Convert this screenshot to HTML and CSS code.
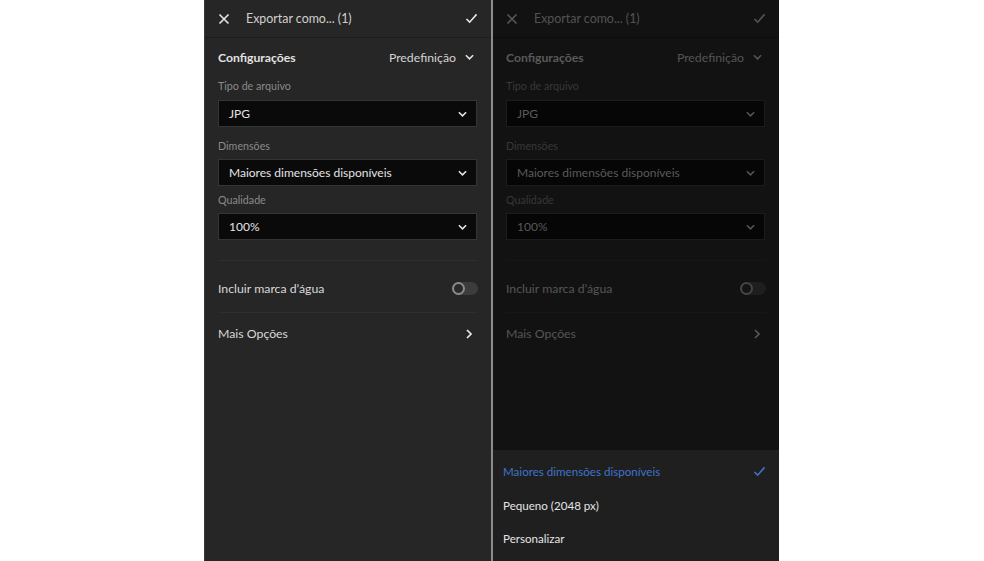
FILE: index.html
```html
<!DOCTYPE html>
<html lang="pt">
<head>
<meta charset="utf-8">
<link rel="stylesheet" href="styles.css">
</head>
<body>
<div class="stage">
  <section class="phone">
    <header class="topbar">
      <svg class="ic-x" viewBox="0 0 12 12"><path d="M1.5 1.5 L10.5 10.5 M10.5 1.5 L1.5 10.5"/></svg>
      <span class="title">Exportar como... (1)</span>
      <svg class="ic-check" viewBox="0 0 14 12"><path d="M1.5 6.5 L5 10 L12.5 1.5"/></svg>
    </header>
    <div class="content">
      <div class="settings-row">
        <span class="settings-title">Configurações</span>
        <span class="preset">Predefinição <svg class="chev" viewBox="0 0 10 6"><path d="M1 1 L5 5 L9 1"/></svg></span>
      </div>
      <div class="label l1">Tipo de arquivo</div>
      <div class="select">JPG <svg class="chev" viewBox="0 0 10 6"><path d="M1 1 L5 5 L9 1"/></svg></div>
      <div class="label l2">Dimensões</div>
      <div class="select">Maiores dimensões disponíveis <svg class="chev" viewBox="0 0 10 6"><path d="M1 1 L5 5 L9 1"/></svg></div>
      <div class="label l3">Qualidade</div>
      <div class="select">100% <svg class="chev" viewBox="0 0 10 6"><path d="M1 1 L5 5 L9 1"/></svg></div>
      <div class="row first-row">
        <span>Incluir marca d’água</span>
        <span class="toggle"><span class="knob"></span></span>
      </div>
      <div class="row">
        <span>Mais Opções</span>
        <svg class="chev-r" viewBox="0 0 6 10"><path d="M1 1 L5 5 L1 9"/></svg>
      </div>
    </div>
  </section>
  <div class="divider"></div>
  <section class="phone dim">
    <header class="topbar">
      <svg class="ic-x" viewBox="0 0 12 12"><path d="M1.5 1.5 L10.5 10.5 M10.5 1.5 L1.5 10.5"/></svg>
      <span class="title">Exportar como... (1)</span>
      <svg class="ic-check" viewBox="0 0 14 12"><path d="M1.5 6.5 L5 10 L12.5 1.5"/></svg>
    </header>
    <div class="content">
      <div class="settings-row">
        <span class="settings-title">Configurações</span>
        <span class="preset">Predefinição <svg class="chev" viewBox="0 0 10 6"><path d="M1 1 L5 5 L9 1"/></svg></span>
      </div>
      <div class="label l1">Tipo de arquivo</div>
      <div class="select">JPG <svg class="chev" viewBox="0 0 10 6"><path d="M1 1 L5 5 L9 1"/></svg></div>
      <div class="label l2">Dimensões</div>
      <div class="select">Maiores dimensões disponíveis <svg class="chev" viewBox="0 0 10 6"><path d="M1 1 L5 5 L9 1"/></svg></div>
      <div class="label l3">Qualidade</div>
      <div class="select">100% <svg class="chev" viewBox="0 0 10 6"><path d="M1 1 L5 5 L9 1"/></svg></div>
      <div class="row first-row">
        <span>Incluir marca d’água</span>
        <span class="toggle"><span class="knob"></span></span>
      </div>
      <div class="row">
        <span>Mais Opções</span>
        <svg class="chev-r" viewBox="0 0 6 10"><path d="M1 1 L5 5 L1 9"/></svg>
      </div>
    </div>
    <div class="sheet">
      <div class="sheet-item selected">
        <span>Maiores dimensões disponíveis</span>
        <svg class="ic-check blue" viewBox="0 0 14 12"><path d="M1.5 6.5 L5 10 L12.5 1.5"/></svg>
      </div>
      <div class="sheet-item">Pequeno (2048 px)</div>
      <div class="sheet-item">Personalizar</div>
    </div>
  </section>
</div>
</body>
</html>
```

FILE: styles.css
```css
* { box-sizing: border-box; }
html, body { margin: 0; padding: 0; background: #ffffff; }
body {
  font-family: Lato, "Noto Sans", sans-serif;
  width: 984px;
  height: 561px;
  overflow: hidden;
}
.stage {
  display: flex;
  height: 561px;
  padding-left: 204px;
}
.phone {
  position: relative;
  width: 287px;
  height: 561px;
  background: #262626;
  color: #d6d6d6;
  border-left: 1px solid #3a3a3a;
}
.divider {
  width: 2px;
  background: #8c8c8c;
}
.topbar {
  height: 38px;
  display: flex;
  align-items: center;
  padding: 0 13px 0 13px;
  border-bottom: 1px solid #1c1c1c;
}
.ic-x {
  width: 12px;
  height: 12px;
  fill: none;
  stroke: #e6e6e6;
  stroke-width: 1.6;
}
.title {
  margin-left: 16px;
  font-size: 12.4px;
  color: #d0d0d0;
  flex: 1;
}
.ic-check {
  width: 13px;
  height: 11px;
  fill: none;
  stroke: #e8e8e8;
  stroke-width: 1.7;
}
.content {
  padding: 0 14px 0 13px;
}
.settings-row {
  height: 38px;
  display: flex;
  align-items: center;
  justify-content: space-between;
}
.settings-title {
  font-size: 12.2px;
  font-weight: 700;
  color: #e2e2e2;
}
.preset {
  font-size: 12.3px;
  color: #d4d4d4;
  display: flex;
  align-items: center;
  gap: 9px;
  padding-right: 3px;
}
.chev {
  width: 9px;
  height: 6px;
  fill: none;
  stroke: #e6e6e6;
  stroke-width: 1.7;
}
.chev-r {
  width: 6px;
  height: 10px;
  fill: none;
  stroke: #e6e6e6;
  stroke-width: 1.7;
  margin-right: 5px;
}
.label {
  font-size: 10.7px;
  color: #8a8a8a;
  height: 14px;
  line-height: 14px;
}
.l1 { margin-top: 3px; margin-bottom: 7px; }
.l2 { margin-top: 12px; margin-bottom: 6px; }
.l3 { margin-top: 7px; margin-bottom: 6px; }
.select {
  height: 27px;
  background: #0a0a0a;
  border: 1px solid #353535;
  display: flex;
  align-items: center;
  justify-content: space-between;
  padding: 0 9px 0 10px;
  font-size: 12px;
  color: #e4e4e4;
}
.row {
  height: 42px;
  display: flex;
  align-items: center;
  justify-content: space-between;
  font-size: 12.3px;
  color: #d8d8d8;
  border-top: 1px solid #2e2e2e;
}
.first-row {
  margin-top: 20px;
  height: 52px;
  padding-top: 3px;
}
.toggle {
  position: relative;
  width: 26px;
  height: 13px;
  border-radius: 7px;
  background: #3c3c3c;
  margin-right: -1px;
}
.knob {
  position: absolute;
  left: 0;
  top: 0;
  width: 13px;
  height: 13px;
  border-radius: 50%;
  background: #2a2a2a;
  border: 2px solid #8a8a8a;
}
/* dimmed state */
.dim {
  background: #121212;
  border-left: none;
  width: 286px;
}
.dim .topbar { border-bottom-color: #0c0c0c; }
.dim .title { color: #525252; }
.dim .ic-x, .dim .ic-check, .dim .chev, .dim .chev-r { stroke: #565656; }
.dim .settings-title { color: #5a5a5a; }
.dim .preset { color: #555; }
.dim .label { color: #383838; }
.dim .select { background: #060606; border-color: #1c1c1c; color: #5a5a5a; }
.dim .row { color: #565656; border-top-color: #161616; }
.dim .toggle { background: #1e1e1e; }
.dim .knob { background: #141414; border-color: #444; }
.sheet {
  position: absolute;
  left: 0;
  right: 0;
  bottom: 0;
  height: 111px;
  background: #1f1f1f;
  padding: 5px 13px 0 10px;
}
.sheet-item {
  height: 33.5px;
  display: flex;
  align-items: center;
  justify-content: space-between;
  font-size: 11.6px;
  color: #e4e4e4;
}
.sheet-item.selected { color: #3f73cc; }
.dim .sheet .ic-check.blue { stroke: #3f73cc; }
```
